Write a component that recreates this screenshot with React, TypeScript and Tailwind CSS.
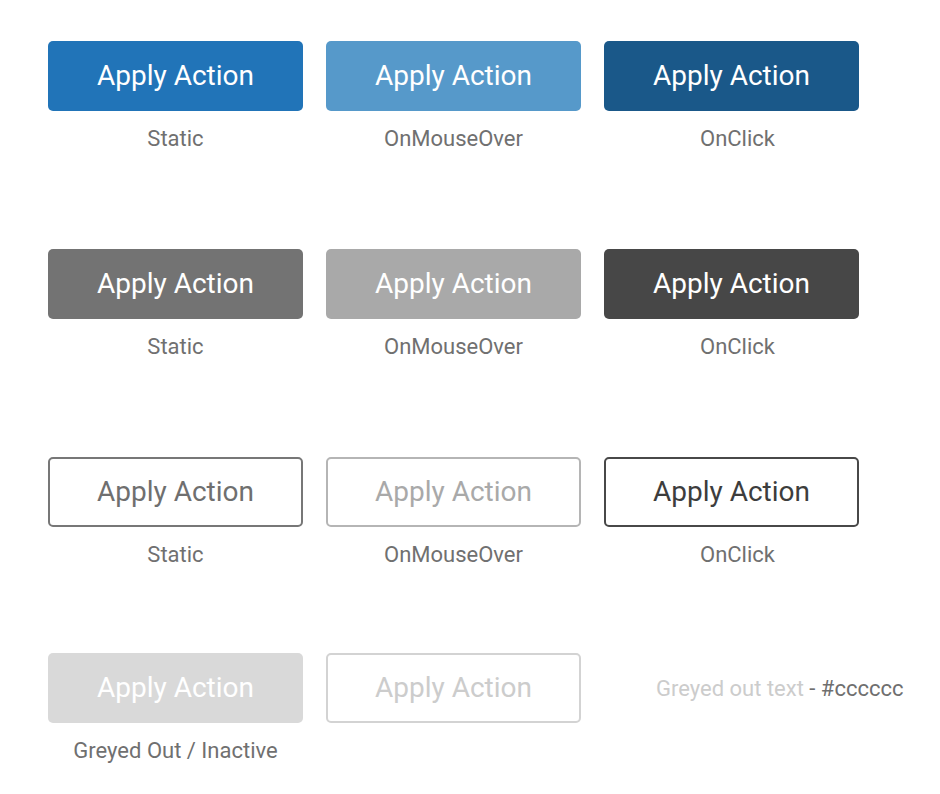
const font = { fontFamily: "Roboto, 'Liberation Sans', sans-serif" };

type Btn = { cls: string; label: string; labelCls?: string };

const rows: Btn[][] = [
  [
    { cls: "bg-[#2174b8] text-white", label: "Static" },
    { cls: "bg-[#5699ca] text-white", label: "OnMouseOver" },
    { cls: "bg-[#1a5889] text-white", label: "OnClick", labelCls: "pl-3" },
  ],
  [
    { cls: "bg-[#737373] text-white", label: "Static" },
    { cls: "bg-[#a9a9a9] text-white", label: "OnMouseOver" },
    { cls: "bg-[#474747] text-white", label: "OnClick", labelCls: "pl-3" },
  ],
  [
    { cls: "border-2 border-[#777777] text-[#6f6f6f]", label: "Static" },
    { cls: "border-2 border-[#b5b5b5] text-[#a9a9a9]", label: "OnMouseOver" },
    { cls: "border-2 border-[#484848] text-[#3d3d3d]", label: "OnClick", labelCls: "pl-3" },
  ],
];

function Button({ cls }: { cls: string }) {
  return (
    <div className={`w-[255px] h-[70px] rounded-[5px] flex items-center justify-center text-[28px] ${cls}`}>
      Apply Action
    </div>
  );
}

export default function App() {
  return (
    <div className="w-[940px] h-[794px] bg-white pl-12 pt-[41px]" style={font}>
      {rows.map((row, i) => (
        <div key={i} className="flex gap-[23px] mb-[98px]">
          {row.map((b, j) => (
            <div key={j} className="flex flex-col items-center">
              <Button cls={b.cls} />
              <div className={`mt-4 text-[22px] leading-6 text-[#707070] ${b.labelCls ?? ""}`}>{b.label}</div>
            </div>
          ))}
        </div>
      ))}
      <div className="flex gap-[23px] -mt-[12px]">
        <div className="flex flex-col items-center">
          <Button cls="bg-[#d9d9d9] text-white" />
          <div className="mt-4 text-[22px] leading-6 text-[#707070]">Greyed Out / Inactive</div>
        </div>
        <div>
          <Button cls="border-2 border-[#d3d3d3] text-[#cccccc]" />
        </div>
        <div className="h-[70px] flex items-center pl-[52px] text-[22px]">
          <span className="text-[#cccccc]">Greyed out text</span>
          <span className="text-[#6f6f6f]">&nbsp;- #cccccc</span>
        </div>
      </div>
    </div>
  );
}
